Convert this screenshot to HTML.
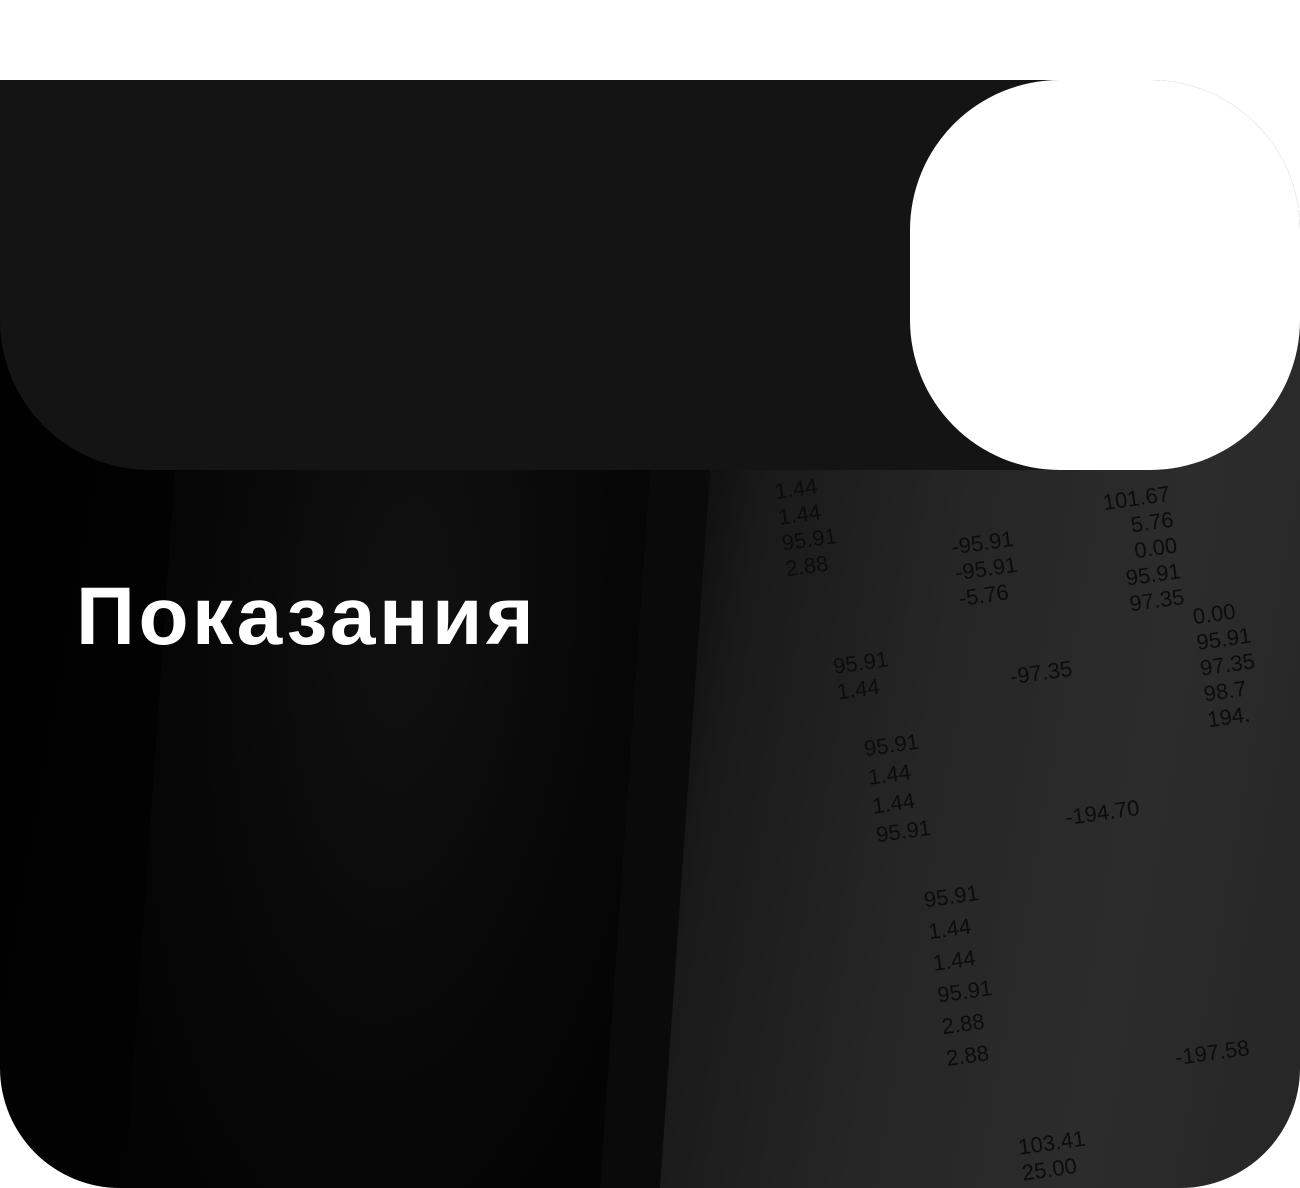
<!DOCTYPE html>
<html><head><meta charset="utf-8"><style>
html,body{margin:0;padding:0;background:#fff;width:1300px;height:1188px;overflow:hidden;font-family:"Liberation Sans",sans-serif}
.photo{position:absolute;left:0;top:80px;width:1300px;height:1108px;border-radius:0 150px 120px 120px;overflow:hidden;
background:linear-gradient(100deg,#000 0%,#050505 40%,#0c0c0c 50%,#151515 54%,#1a1a1a 56%,#262626 70%,#2c2c2c 85%,#262626 100%)}
.calc{position:absolute;left:150px;top:390px;width:480px;height:720px;background:radial-gradient(ellipse at 50% 20%,#111 0%,#070707 60%,#030303 100%);transform:skewX(-4deg)}
.div{position:absolute;left:625px;top:390px;width:60px;height:720px;background:#0a0a0a;transform:skewX(-4deg)}
.n{position:absolute;color:#0c0c0c;font-size:22px;transform:rotate(-8deg);font-family:"Liberation Sans",sans-serif}
.header{position:absolute;left:0;top:80px;width:1120px;height:390px;background:#141414;border-bottom-left-radius:150px}
.sq{position:absolute;left:910px;top:80px;width:390px;height:390px;background:#fff;border-radius:150px}
h1{position:absolute;left:76px;top:576px;margin:0;color:#fff;font-size:82px;font-weight:bold;letter-spacing:3.5px;line-height:1}
</style></head><body>
<div class="photo">
<div class="calc"></div><div class="div"></div>
<div class="n" style="left:780px;top:395px">1.44<br>1.44<br>95.91<br>2.88</div>
<div class="n" style="left:955px;top:450px">-95.91<br>-95.91<br>-5.76</div>
<div class="n" style="left:1110px;top:405px;text-align:right">101.67<br>5.76<br>0.00<br>95.91<br>97.35</div>
<div class="n" style="left:1200px;top:520px">0.00<br>95.91<br>97.35<br>98.7<br>194.</div>
<div class="n" style="left:835px;top:570px">95.91<br>1.44</div>
<div class="n" style="left:1010px;top:580px">-97.35</div>
<div class="n" style="left:870px;top:650px;line-height:29px">95.91<br>1.44<br>1.44<br>95.91</div>
<div class="n" style="left:1065px;top:720px">-194.70</div>
<div class="n" style="left:935px;top:800px;line-height:32px">95.91<br>1.44<br>1.44<br>95.91<br>2.88<br>2.88</div>
<div class="n" style="left:1175px;top:960px">-197.58</div>
<div class="n" style="left:1020px;top:1050px">103.41<br>25.00</div>
</div>
<div class="header"></div>
<div class="sq"></div>
<h1>Показания</h1>
</body></html>
